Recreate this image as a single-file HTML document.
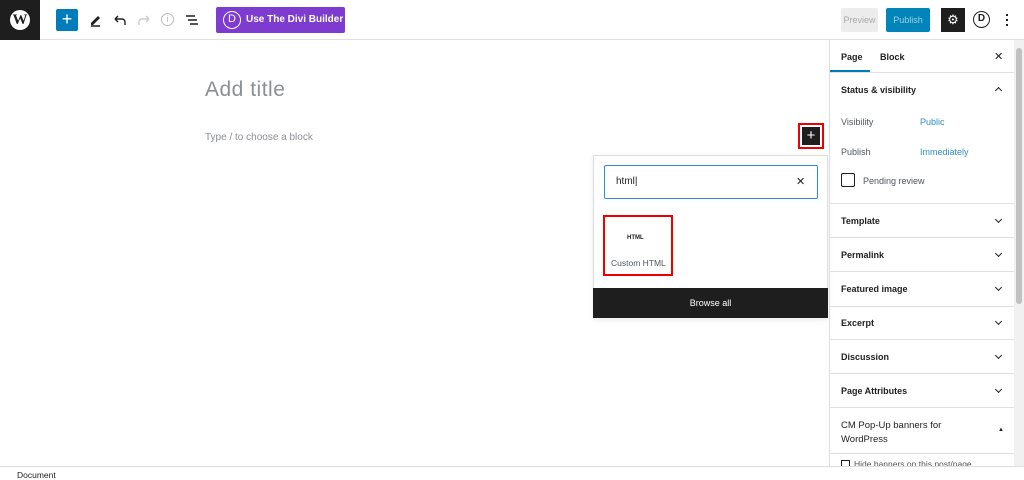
<!DOCTYPE html>
<html><head><meta charset="utf-8"><style>
*{box-sizing:border-box;margin:0;padding:0}
body{width:1024px;height:478px;overflow:hidden;background:#fff;font-family:"Liberation Sans",sans-serif;color:#1e1e1e;position:relative}
.a{position:absolute;white-space:nowrap}
.side div.row{position:absolute;left:829px;width:185px;border-top:1px solid #e0e0e0;font-size:9px;font-weight:bold;padding-left:12px}
.chev{position:absolute;right:13px;width:5px;height:5px;border-right:1.3px solid #1e1e1e;border-bottom:1.3px solid #1e1e1e;transform:rotate(45deg)}
</style></head><body>
<div class="a" style="left:0;top:0;width:1024px;height:40px;border-bottom:1px solid #e0e0e0"></div>
<div class="a" style="left:0;top:0;width:40px;height:40px;background:#1e1e1e"></div>
<div class="a" style="left:10px;top:10px;width:20px;height:20px;border-radius:50%;background:#fff;color:#1e1e1e;font:bold 15px 'Liberation Serif',serif;text-align:center;line-height:20px">W</div>
<div class="a" style="left:56px;top:9px;width:22px;height:22px;background:#007cba;border-radius:2px;color:#fff;font-size:18px;text-align:center;line-height:21px">+</div>
<svg class="a" style="left:88px;top:12px" width="16" height="16"><path d="M3 11l7-7 2 2-7 7H3z" fill="#1e1e1e"/><path d="M3 14h9" stroke="#1e1e1e" stroke-width="1.5"/></svg>
<svg class="a" style="left:112px;top:12px" width="16" height="16"><path d="M3 7h7a3 3 0 013 3v3M3 7l3-3M3 7l3 3" stroke="#1e1e1e" stroke-width="1.4" fill="none"/></svg>
<svg class="a" style="left:136px;top:12px" width="16" height="16"><path d="M13 7H6a3 3 0 00-3 3v3M13 7l-3-3M13 7l-3 3" stroke="#ccc" stroke-width="1.4" fill="none"/></svg>
<div class="a" style="left:161px;top:13px;width:13px;height:13px;border:1.3px solid #bbb;border-radius:50%;color:#bbb;font-size:9px;text-align:center;line-height:11px">i</div>
<svg class="a" style="left:184px;top:12px" width="16" height="16"><path d="M2 4h9M4 8h9M6 12h8" stroke="#1e1e1e" stroke-width="1.5"/></svg>
<div class="a" style="left:216px;top:7px;width:129px;height:26px;background:#7e3bd0;border-radius:2px;color:#fff;font-size:10px;font-weight:bold;line-height:26px;padding-left:30px">Use The Divi Builder</div>
<div class="a" style="left:223px;top:11px;width:18px;height:18px;border:1.5px solid #fff;border-radius:50%;color:#fff;font-size:11px;text-align:center;line-height:15px">D</div>
<div class="a" style="left:841px;top:8px;width:37px;height:24px;background:#ececec;color:#a7aaad;font-size:9px;text-align:center;line-height:24px;border-radius:2px">Preview</div>
<div class="a" style="left:886px;top:8px;width:44px;height:24px;background:#0085ba;color:#9ed0e8;font-size:9px;text-align:center;line-height:24px;border-radius:2px">Publish</div>
<div class="a" style="left:941px;top:8px;width:24px;height:24px;background:#1e1e1e;color:#fff;font-size:13px;text-align:center;line-height:24px">⚙</div>
<div class="a" style="left:973px;top:11px;width:17px;height:17px;border:1.6px solid #1e1e1e;border-radius:50%;font-size:10px;font-weight:bold;text-align:center;line-height:14px">D</div>
<div class="a" style="left:1006px;top:14px;width:2px;height:2px;background:#1e1e1e;box-shadow:0 5px 0 #1e1e1e,0 10px 0 #1e1e1e"></div>
<div class="a" style="left:205px;top:78px;font-size:21px;color:#8c8f94;letter-spacing:0.5px">Add title</div>
<div class="a" style="left:205px;top:132px;font-size:10px;color:#8c8f94">Type / to choose a block</div>
<div class="a" style="left:798px;top:123px;width:26px;height:26px;border:2px solid #e00"></div>
<div class="a" style="left:802px;top:127px;width:18px;height:18px;background:#1e1e1e;color:#fff;font-size:15px;text-align:center;line-height:17px">+</div>
<div class="a" style="left:593px;top:155px;width:235px;height:163px;border:1px solid #ddd;background:#fff;box-shadow:0 2px 6px rgba(0,0,0,.08)"></div>
<div class="a" style="left:604px;top:165px;width:214px;height:34px;border:1.5px solid #2f8fc8;border-radius:2px;font-size:10px;line-height:32px;padding-left:11px">html|</div>
<div class="a" style="left:796px;top:175px;font-size:11px">✕</div>
<div class="a" style="left:603px;top:215px;width:70px;height:61px;border:2px solid #e00"></div>
<div class="a" style="left:627px;top:235px;font-size:6px;font-weight:bold">HTML</div>
<div class="a" style="left:611px;top:258px;font-size:8.5px;color:#50575e">Custom HTML</div>
<div class="a" style="left:593px;top:288px;width:235px;height:30px;background:#1e1e1e;color:#fff;font-size:9px;text-align:center;line-height:30px">Browse all</div>
<div class="a" style="left:829px;top:40px;width:1px;height:426px;background:#e0e0e0"></div>
<div class="a" style="left:1014px;top:40px;width:10px;height:426px;background:#f1f1f1"></div>
<div class="a" style="left:1016px;top:48px;width:6px;height:256px;background:#c1c1c1;border-radius:3px"></div>
<div class="a" style="left:841px;top:52px;font-size:9px;font-weight:bold">Page</div>
<div class="a" style="left:880px;top:52px;font-size:9px;font-weight:bold">Block</div>
<div class="a" style="left:994px;top:50px;font-size:11px">✕</div>
<div class="a" style="left:830px;top:70px;width:40px;height:2px;background:#007cba"></div>
<div class="a" style="left:830px;top:72px;width:184px;height:1px;background:#e0e0e0"></div>
<div class="a" style="left:841px;top:85px;font-size:9px;font-weight:bold">Status &amp; visibility</div>
<div class="a" style="left:996px;top:88px;width:5px;height:5px;border-left:1.3px solid #1e1e1e;border-top:1.3px solid #1e1e1e;transform:rotate(45deg)"></div>
<div class="a" style="left:841px;top:117px;font-size:9px;color:#50575e">Visibility</div>
<div class="a" style="left:920px;top:117px;font-size:9px;color:#2f8fc8">Public</div>
<div class="a" style="left:841px;top:147px;font-size:9px;color:#50575e">Publish</div>
<div class="a" style="left:920px;top:147px;font-size:9px;color:#2f8fc8">Immediately</div>
<div class="a" style="left:841px;top:173px;width:14px;height:14px;border:1px solid #1e1e1e;border-radius:2px"></div>
<div class="a" style="left:863px;top:176px;font-size:9px;color:#50575e">Pending review</div>
<div class="side">
<div class="row" style="top:203px;height:34px;line-height:34px">Template<span class="chev" style="top:13px"></span></div>
<div class="row" style="top:237px;height:34px;line-height:34px">Permalink<span class="chev" style="top:13px"></span></div>
<div class="row" style="top:271px;height:35px;line-height:35px">Featured image<span class="chev" style="top:13px"></span></div>
<div class="row" style="top:306px;height:33px;line-height:33px">Excerpt<span class="chev" style="top:12px"></span></div>
<div class="row" style="top:339px;height:34px;line-height:34px">Discussion<span class="chev" style="top:13px"></span></div>
<div class="row" style="top:373px;height:34px;line-height:34px">Page Attributes<span class="chev" style="top:13px"></span></div>
<div class="row" style="top:407px;height:47px;padding-top:11px;line-height:14px;font-weight:normal;font-size:9.5px">CM Pop-Up banners for<br>WordPress<span style="position:absolute;right:10px;top:15px;font-size:6px">▲</span></div>
</div>
<div class="a" style="left:829px;top:453px;width:185px;height:1px;background:#e0e0e0"></div>
<div class="a" style="left:841px;top:460px;width:9px;height:9px;border:1px solid #1e1e1e"></div>
<div class="a" style="left:854px;top:459px;font-size:8.5px;color:#50575e">Hide banners on this post/page</div>
<div class="a" style="left:0;top:466px;width:1024px;height:12px;background:#fff;border-top:1px solid #e0e0e0"></div>
<div class="a" style="left:17px;top:470px;font-size:8.5px;color:#1e1e1e">Document</div>
</body></html>
